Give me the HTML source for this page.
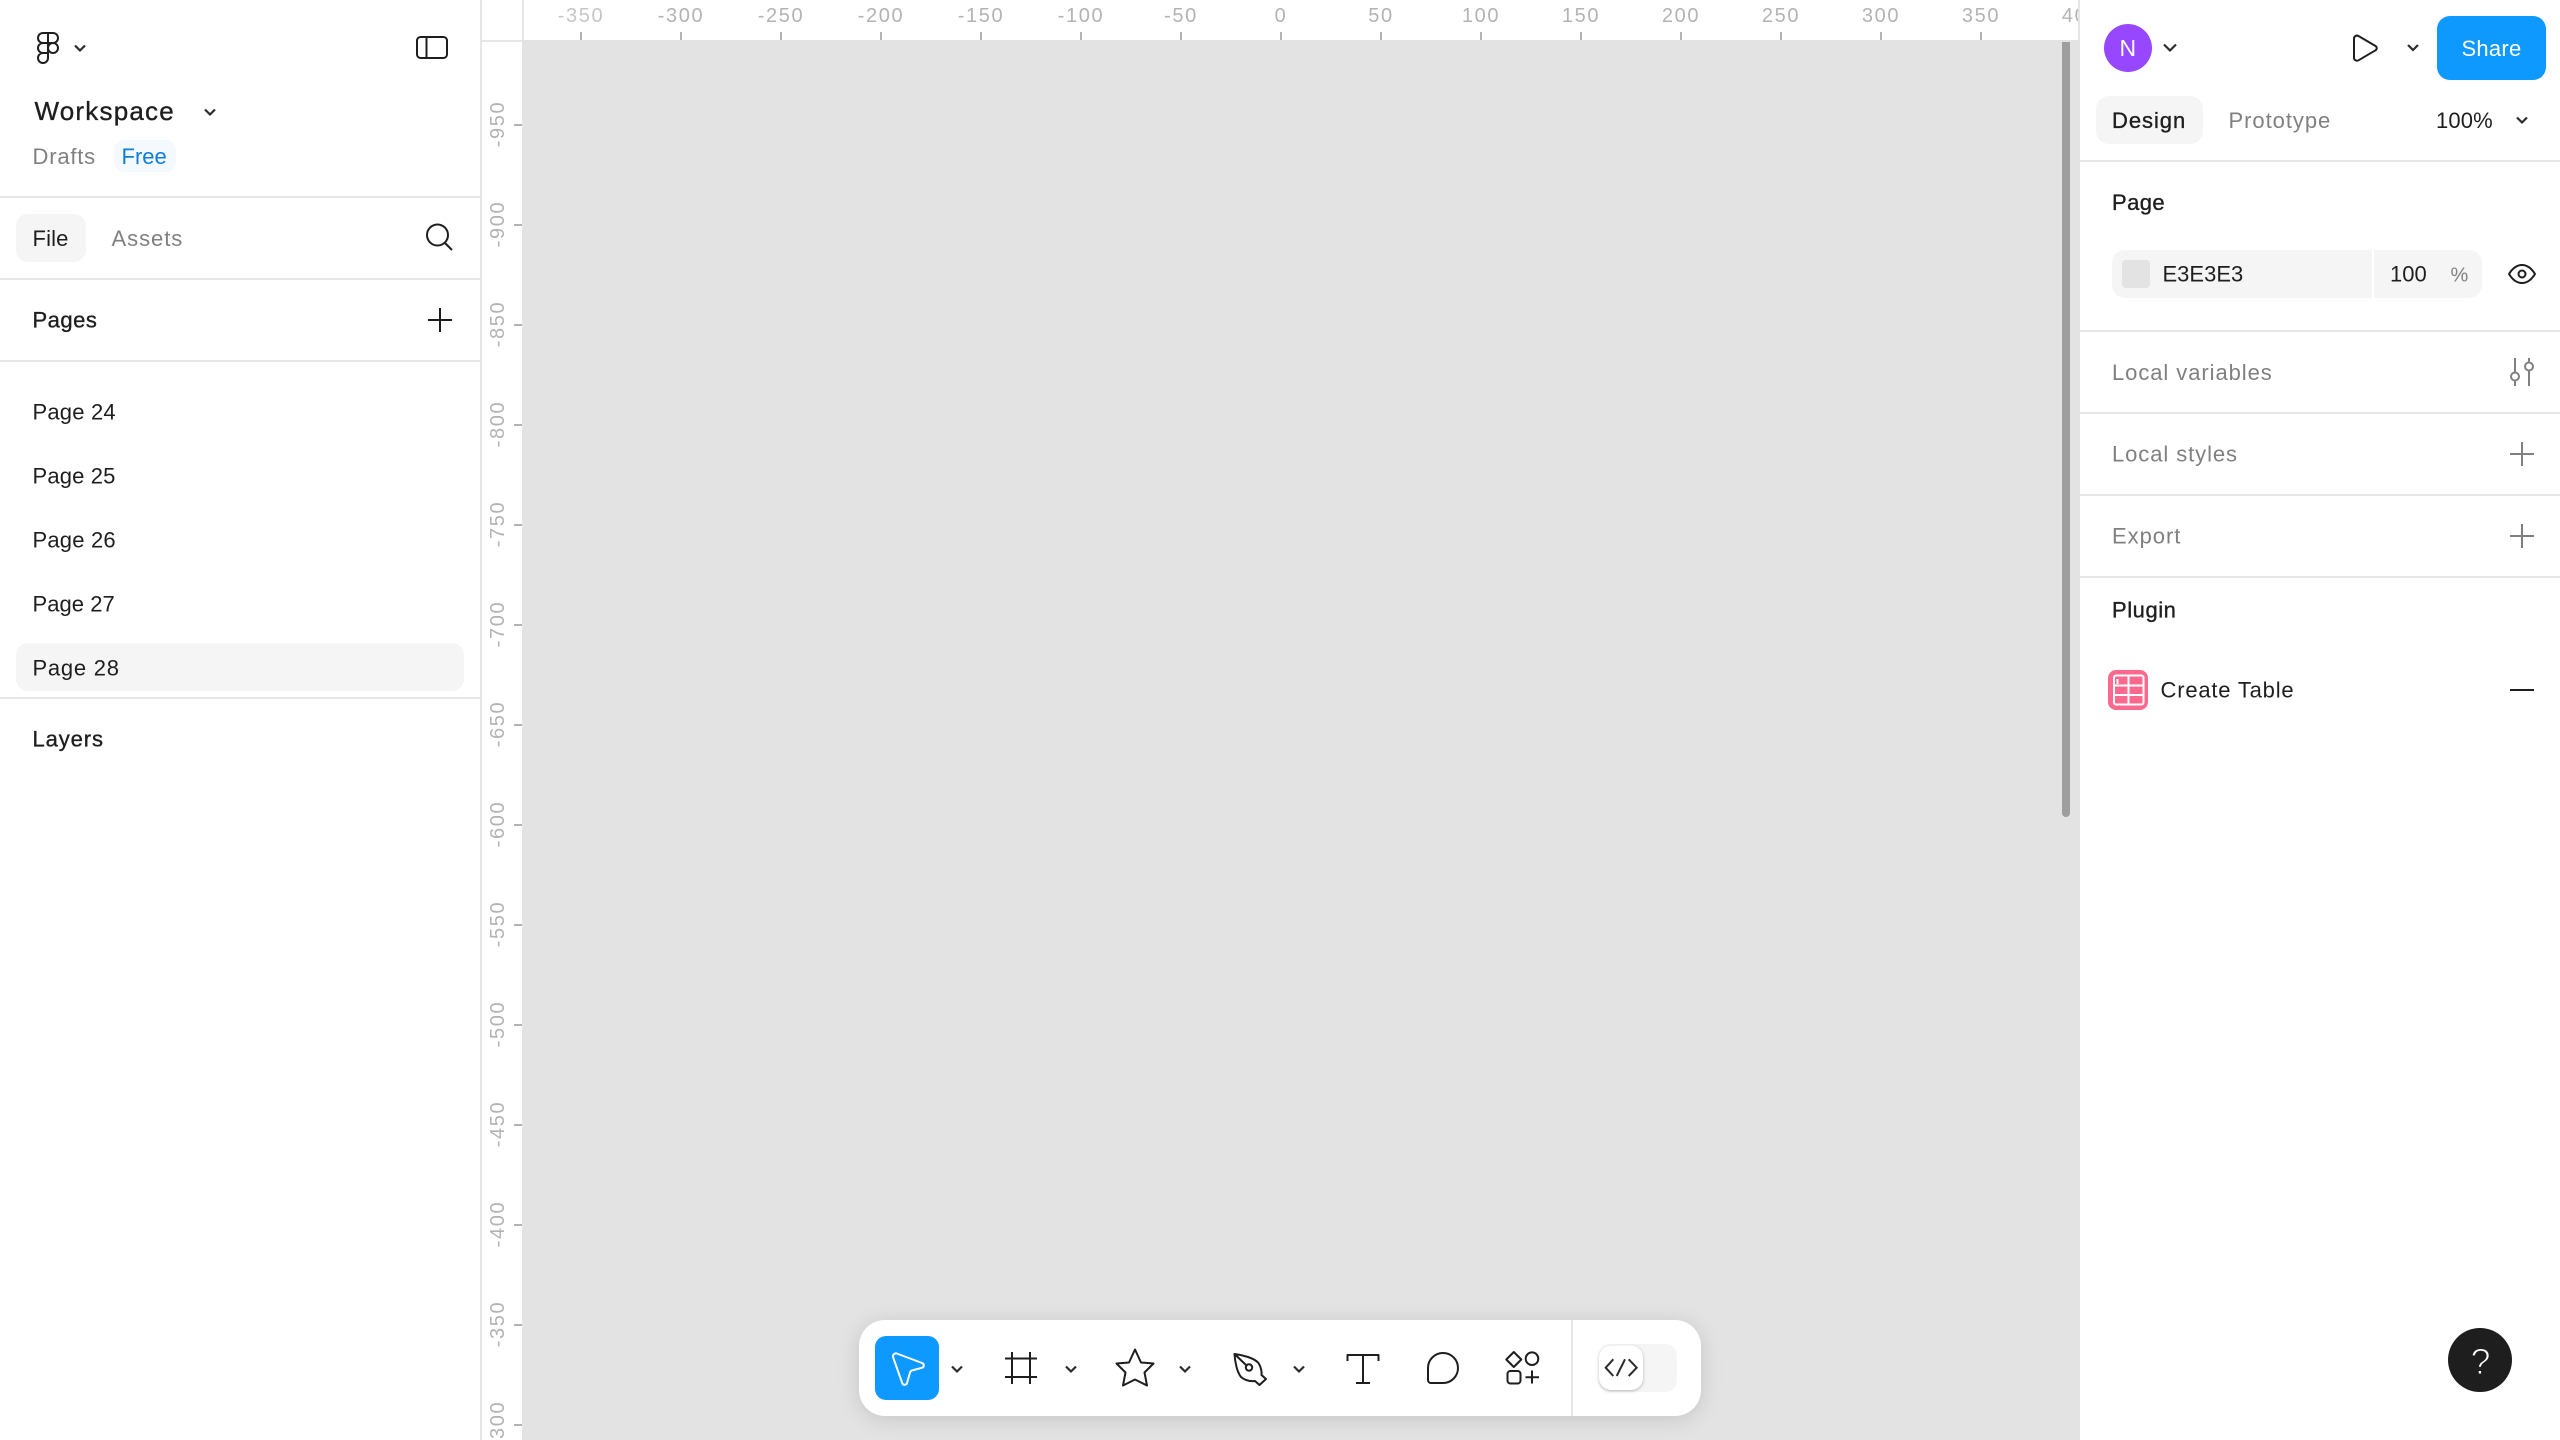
<!DOCTYPE html>
<html lang="en">
<head>
<meta charset="utf-8">
<title>Workspace</title>
<style>
html,body{margin:0;padding:0;width:2560px;height:1440px;overflow:hidden;background:#fff}
svg{position:absolute;left:0;top:0;display:block;font-family:"Liberation Sans",sans-serif}
text{white-space:pre}
.p{font-size:22px;fill:#1e1e1e}
.m{font-size:22px;fill:#1e1e1e;stroke:#1e1e1e;stroke-width:.35px}
.g{font-size:22px;fill:#808080}
.i{fill:none;stroke:#1e1e1e;stroke-width:2;stroke-linejoin:round}
.c{fill:none;stroke:#2c2c2c;stroke-width:2.2}
.gi{fill:none;stroke:#808080;stroke-width:2}
.rh text{font-size:20px;fill:#b3b3b3;letter-spacing:1.6px;text-anchor:middle}
</style>
</head>
<body>
<svg width="2560" height="1440" viewBox="0 0 2560 1440" xmlns="http://www.w3.org/2000/svg">
<!-- canvas -->
<rect x="522" y="40" width="1558" height="1400" fill="#e3e3e3"/>
<path d="M2062 42h8v771a4 4 0 0 1-8 0z" fill="#9e9e9e"/>

<!-- top ruler -->
<g class="rh">
<text x="581" y="22" style="fill:#c6c6c6">-350</text><text x="681" y="22">-300</text><text x="781" y="22">-250</text><text x="881" y="22">-200</text><text x="981" y="22">-150</text><text x="1081" y="22">-100</text><text x="1181" y="22">-50</text><text x="1281" y="22">0</text><text x="1381" y="22">50</text><text x="1481" y="22">100</text><text x="1581" y="22">150</text><text x="1681" y="22">200</text><text x="1781" y="22">250</text><text x="1881" y="22">300</text><text x="1981" y="22">350</text><text x="2081" y="22">400</text>
</g>
<path fill="#b3b3b3" d="M580 32h2v8h-2zM680 32h2v8h-2zM780 32h2v8h-2zM880 32h2v8h-2zM980 32h2v8h-2zM1080 32h2v8h-2zM1180 32h2v8h-2zM1280 32h2v8h-2zM1380 32h2v8h-2zM1480 32h2v8h-2zM1580 32h2v8h-2zM1680 32h2v8h-2zM1780 32h2v8h-2zM1880 32h2v8h-2zM1980 32h2v8h-2z"/>
<rect x="522" y="0" width="2" height="40" fill="#e6e6e6"/>
<rect x="482" y="40" width="40" height="2" fill="#e6e6e6"/>
<rect x="2078" y="0" width="2" height="40" fill="#e6e6e6"/>

<!-- left ruler -->
<g class="rh">
<text transform="translate(504 124) rotate(-90)">-950</text>
<text transform="translate(504 224) rotate(-90)">-900</text>
<text transform="translate(504 324) rotate(-90)">-850</text>
<text transform="translate(504 424) rotate(-90)">-800</text>
<text transform="translate(504 524) rotate(-90)">-750</text>
<text transform="translate(504 624) rotate(-90)">-700</text>
<text transform="translate(504 724) rotate(-90)">-650</text>
<text transform="translate(504 824) rotate(-90)">-600</text>
<text transform="translate(504 924) rotate(-90)">-550</text>
<text transform="translate(504 1024) rotate(-90)">-500</text>
<text transform="translate(504 1124) rotate(-90)">-450</text>
<text transform="translate(504 1224) rotate(-90)">-400</text>
<text transform="translate(504 1324) rotate(-90)">-350</text>
<text transform="translate(504 1424) rotate(-90)">-300</text>
</g>
<path fill="#b3b3b3" d="M514 124h8v2h-8zM514 224h8v2h-8zM514 324h8v2h-8zM514 424h8v2h-8zM514 524h8v2h-8zM514 624h8v2h-8zM514 724h8v2h-8zM514 824h8v2h-8zM514 924h8v2h-8zM514 1024h8v2h-8zM514 1124h8v2h-8zM514 1224h8v2h-8zM514 1324h8v2h-8zM514 1424h8v2h-8z"/>

<!-- left panel -->
<rect x="0" y="0" width="480" height="1440" fill="#fff"/>
<rect x="480" y="0" width="2" height="1440" fill="#e6e6e6"/>
<g class="i">
<path d="M48 33h-5a5 5 0 0 0 0 10h5zM48 33h5a5 5 0 0 1 0 10h-5zM48 43h-5a5 5 0 0 0 0 10h5zM48 53h-5a5 5 0 1 0 5 5z"/>
<circle cx="53" cy="48" r="5"/>
<rect x="417" y="37" width="30" height="21" rx="3.5"/>
<path d="M426.500 37v21"/>
<circle cx="437.500" cy="235" r="10.500"/>
<path d="M445 243l7 7"/>
<path d="M428 320h24M440 308v24"/>
</g>
<path class="c" d="M75 45.500l5 5 5-5M205 109.500l5 5 5-5"/>
<text x="34.500" y="120" style="font-size:26px;fill:#1e1e1e;stroke:#1e1e1e;stroke-width:.35px;letter-spacing:1.2px">Workspace</text>
<text x="32.500" y="164" class="g" style="letter-spacing:.8px">Drafts</text>
<rect x="114" y="140" width="62" height="32" rx="10" fill="#f3f9ff"/>
<text x="121.500" y="164" style="font-size:22px;fill:#0d7fd6">Free</text>
<rect x="0" y="196" width="480" height="2" fill="#e6e6e6"/>
<rect x="16" y="214" width="70" height="48" rx="12" fill="#f5f5f5"/>
<text x="32.500" y="246" class="p" style="letter-spacing:.15px">File</text>
<text x="111.500" y="246" class="g" style="letter-spacing:.95px">Assets</text>
<rect x="0" y="278" width="480" height="2" fill="#e6e6e6"/>
<text x="32.500" y="327.500" class="m" style="letter-spacing:.5px">Pages</text>
<rect x="0" y="360" width="480" height="2" fill="#e6e6e6"/>
<text x="32.500" y="419.500" class="p" style="letter-spacing:.2px">Page 24</text>
<text x="32.500" y="483.500" class="p" style="letter-spacing:.15px">Page 25</text>
<text x="32.500" y="547.500" class="p" style="letter-spacing:.2px">Page 26</text>
<text x="32.500" y="611.500" class="p" style="letter-spacing:.05px">Page 27</text>
<rect x="16" y="643" width="448" height="48" rx="12" fill="#f5f5f5"/>
<text x="32.500" y="675.500" class="p" style="letter-spacing:.75px">Page 28</text>
<rect x="0" y="697" width="480" height="2" fill="#e6e6e6"/>
<text x="32.500" y="746.500" class="m" style="letter-spacing:.9px">Layers</text>

<!-- right panel -->
<rect x="2080" y="0" width="480" height="1440" fill="#fff"/>
<circle cx="2128" cy="48" r="24" fill="#9747ff"/>
<text x="2119.500" y="56" style="font-size:23px;fill:#fff">N</text>
<path class="c" d="M2164 44.500l6 6 6-6M2408 45l5 5 5-5M2517 117.500l5 5 5-5"/>
<path class="i" d="M2354 38.600a3 3 0 0 1 4.500-2.600l17 10a2.500 2.500 0 0 1 0 4.300l-17 10a3 3 0 0 1-4.500-2.600z"/>
<rect x="2437" y="16" width="109" height="64" rx="13" fill="#0d99ff"/>
<text x="2461.500" y="56" style="font-size:22px;fill:#fff;letter-spacing:.25px">Share</text>
<rect x="2096" y="96" width="107" height="48" rx="13" fill="#f5f5f5"/>
<text x="2112" y="128" class="m" style="letter-spacing:.95px">Design</text>
<text x="2228.500" y="128" class="g" style="letter-spacing:.95px">Prototype</text>
<text x="2436" y="128" class="p" style="letter-spacing:.15px">100%</text>
<rect x="2080" y="160" width="480" height="2" fill="#e6e6e6"/>
<text x="2112" y="210" class="m" style="letter-spacing:.4px">Page</text>
<rect x="2112" y="250" width="370" height="48" rx="13" fill="#f5f5f5"/>
<rect x="2372" y="250" width="2" height="48" fill="#fff"/>
<rect x="2122" y="260" width="28" height="28" rx="4" fill="#e3e3e3"/>
<text x="2162.500" y="281.500" class="p">E3E3E3</text>
<text x="2390" y="281.500" class="p">100</text>
<text x="2450.500" y="281.500" style="font-size:20px;fill:#808080">%</text>
<g class="i">
<path d="M2509 274c4-6.500 8.500-9 13-9s9 2.500 13 9c-4 6.500-8.500 9-13 9s-9-2.500-13-9z"/>
<circle cx="2522" cy="274" r="3.500"/>
</g>
<rect x="2080" y="330" width="480" height="2" fill="#e6e6e6"/>
<text x="2112" y="380" class="g" style="letter-spacing:.93px">Local variables</text>
<g class="gi">
<path d="M2515 358v14M2515 381v5M2529 358v4M2529 371v15"/>
<circle cx="2515" cy="376.500" r="4"/>
<circle cx="2529" cy="366.500" r="4"/>
</g>
<rect x="2080" y="412" width="480" height="2" fill="#e6e6e6"/>
<text x="2112" y="461.500" class="g" style="letter-spacing:.92px">Local styles</text>
<path class="gi" d="M2510 454h24M2522 442v24"/>
<rect x="2080" y="494" width="480" height="2" fill="#e6e6e6"/>
<text x="2112" y="543.500" class="g" style="letter-spacing:.95px">Export</text>
<path class="gi" d="M2510 536h24M2522 524v24"/>
<rect x="2080" y="576" width="480" height="2" fill="#e6e6e6"/>
<text x="2112" y="617.500" class="m" style="letter-spacing:.55px">Plugin</text>
<rect x="2108" y="670" width="40" height="40" rx="8" fill="#fb6a8e"/>
<g fill="none" stroke="#fff" stroke-width="2">
<rect x="2114" y="675.500" width="29.500" height="29" rx="2"/>
<path d="M2128.500 675.500v29M2114 685.500h29.500M2114 695h29.500M2117.500 679v5"/>
</g>
<text x="2160.500" y="697.500" class="p" style="letter-spacing:.8px">Create Table</text>
<path class="i" d="M2510 690h24"/>
<circle cx="2480" cy="1360" r="32" fill="#1e1e1e"/>
<text x="2480.500" y="1374" text-anchor="middle" style="font-size:36px;fill:#fff;stroke:#1e1e1e;stroke-width:1.1px">?</text>

<!-- toolbar -->
<rect x="859" y="1320" width="842" height="96" rx="26" fill="#fff" style="filter:drop-shadow(0 3px 10px rgba(0,0,0,.13))"/>
<rect x="875" y="1336" width="64" height="64" rx="11" fill="#0d99ff"/>
<path d="M893 1357a3 3 0 0 1 3.800-3.500L922 1363a2.500 2.500 0 0 1 .2 4.700L912 1370.500a2.500 2.500 0 0 0-1.900 1.800L907 1383a2.500 2.500 0 0 1-4.700.3z" fill="none" stroke="#fff" stroke-width="2" stroke-linejoin="round"/>
<path class="c" d="M952 1366.500l5 5 5-5M1066 1366.500l5 5 5-5M1180 1366.500l5 5 5-5M1294 1366.500l5 5 5-5"/>
<g class="i">
<path d="M1012 1352v32M1030 1352v32M1005 1358.500h32M1005 1377h32"/>
<path d="M1135 1349.500l6 13 12.500 1-9 9 2.500 13-12-6-12 6 2.500-13-9-9 12.500-1z"/>
<path d="M1234.500 1354c8.500 1 19.500 4 24 9 2.500 4 3.500 9 3 12l4.500 4-6.500 6-4.500-4c-5 .5-10-.5-14-4-4-5-6-15-6.500-23zM1234.500 1354l11.500 11"/>
<circle cx="1249" cy="1367.500" r="3.200"/>
<path d="M1347.500 1361v-6h31v6M1363 1355v28M1356 1383h14"/>
<path d="M1428 1368a15 15 0 1 1 15 15h-12a3 3 0 0 1-3-3z"/>
<path d="M1513.800 1352l7.500 7.500-7.500 7.500-7.500-7.500z"/>
<circle cx="1532" cy="1358.700" r="6.300"/>
<rect x="1507.500" y="1371" width="13" height="12.500" rx="3"/>
<path d="M1525.500 1377.300h13.500M1532 1370.500v13"/>
</g>
<rect x="1571" y="1320" width="2" height="96" fill="#e6e6e6"/>
<rect x="1599" y="1344" width="78" height="48" rx="12" fill="#f5f5f5"/>
<rect x="1599" y="1345.500" width="44" height="44.500" rx="12" fill="#fff" style="filter:drop-shadow(0 1px 1.500px rgba(0,0,0,.25))"/>
<path fill="none" stroke="#2c2c2c" stroke-width="2" d="M1613.300 1359.300l-7.600 8.400 7.600 8.300M1625 1359.300l-8.300 16.700M1628.700 1359.300l8 8.400-8 8.300"/>
</svg>
</body>
</html>
